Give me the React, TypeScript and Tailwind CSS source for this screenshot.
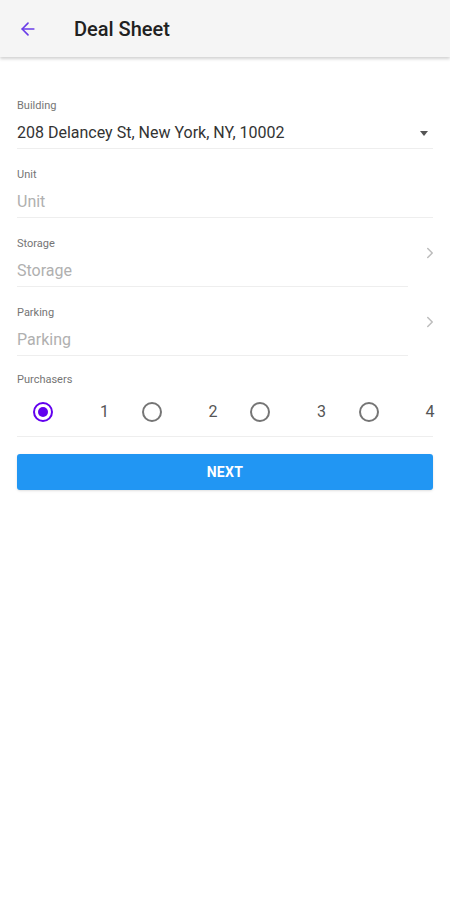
import { ArrowLeft, ChevronRight } from "lucide-react";

const font = { fontFamily: "Roboto, 'Liberation Sans', sans-serif" };

function Field({
  label,
  value,
  placeholder,
  right,
  short,
}: {
  label: string;
  value?: string;
  placeholder?: string;
  right?: React.ReactNode;
  short?: boolean;
}) {
  return (
    <div className="flex items-center">
      <div
        className={`flex flex-1 flex-col border-b border-[#eeeeee] pt-[19px] pb-[5px] ${short ? "mr-[13px]" : ""}`}
      >
        <div className="h-[14px] text-[11px] leading-[14px] text-[#757575]">{label}</div>
        <div className="mt-[10px] flex h-[20px] items-center justify-between">
          {value ? (
            <span className="text-[16px] leading-[20px] text-[#333333]">{value}</span>
          ) : (
            <span className="text-[16px] leading-[20px] text-[#b0b0b0]">{placeholder}</span>
          )}
          {!short && right}
        </div>
      </div>
      {short && right}
    </div>
  );
}

function Radio({ checked }: { checked?: boolean }) {
  return (
    <div
      className={`flex h-[20px] w-[20px] shrink-0 items-center justify-center rounded-full border-2 ${checked ? "border-[#6200ee]" : "border-[#757575]"}`}
    >
      {checked && <div className="h-[10px] w-[10px] rounded-full bg-[#6200ee]" />}
    </div>
  );
}

export default function App() {
  const options = ["1", "2", "3", "4"];
  return (
    <div className="min-h-[900px] overflow-hidden bg-white" style={font}>
      <header className="flex h-[57px] items-center bg-[#f5f5f5] shadow-[0_2px_3px_rgba(0,0,0,0.18)]">
        <ArrowLeft className="ml-[18px] h-[20px] w-[20px] text-[#6a3de8]" strokeWidth={2} />
        <h1 className="ml-[36px] text-[20px] font-medium text-[#212121]">Deal Sheet</h1>
      </header>

      <main className="px-[17px] pt-[23px]">
        <Field
          label="Building"
          value="208 Delancey St, New York, NY, 10002"
          right={
            <svg width="10" height="5" viewBox="0 0 10 5" className="mr-[4px]">
              <path d="M1 0h8L5 5z" fill="#555555" />
            </svg>
          }
        />
        <Field label="Unit" placeholder="Unit" />
        <Field
          label="Storage"
          placeholder="Storage"
          short
          right={<ChevronRight className="-mr-[6px] h-[18px] w-[18px] shrink-0 text-[#bdbdbd]" strokeWidth={2} />}
        />
        <Field
          label="Parking"
          placeholder="Parking"
          short
          right={<ChevronRight className="-mr-[6px] h-[18px] w-[18px] shrink-0 text-[#bdbdbd]" strokeWidth={2} />}
        />

        <div className="border-b border-[#eeeeee] pt-[17px] pb-[12px]">
          <div className="h-[14px] text-[11px] leading-[14px] text-[#757575]">Purchasers</div>
          <div className="mt-[13px] flex h-[24px]">
            {options.map((o, i) => (
              <div key={o} className="flex w-[108.5px] shrink-0 items-center pl-[16px]">
                <Radio checked={i === 0} />
                <span className="ml-[47px] text-[16px] leading-[24px] text-[#555555]">{o}</span>
              </div>
            ))}
          </div>
        </div>

        <button className="mt-[17px] flex h-[36px] w-full items-center justify-center rounded-[3px] bg-[#2196f3] text-[14px] font-bold tracking-wide text-white shadow-sm">
          NEXT
        </button>
      </main>
    </div>
  );
}
